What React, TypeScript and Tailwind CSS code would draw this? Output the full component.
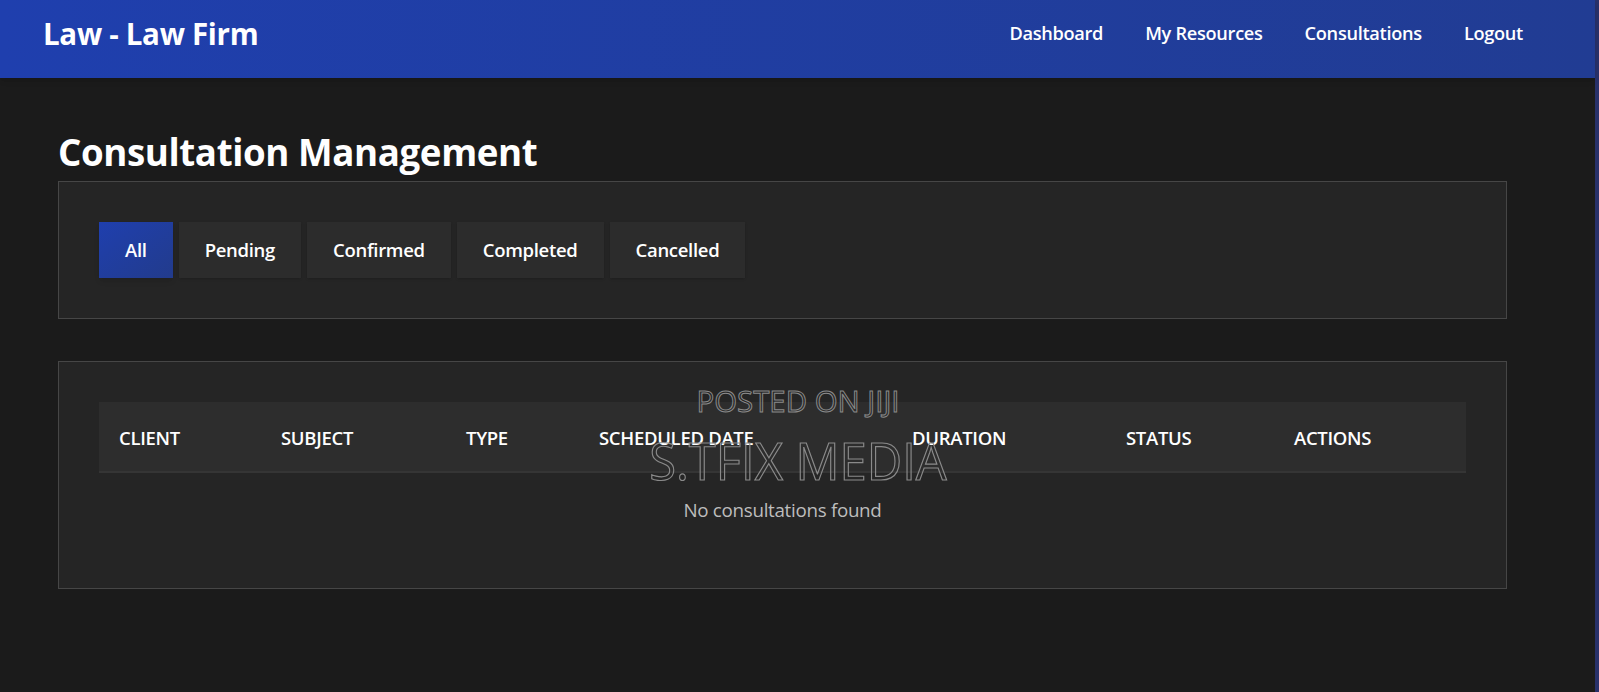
import React, { useState } from 'react';

const FILTERS = ['All', 'Pending', 'Confirmed', 'Completed', 'Cancelled'];
const NAV = ['Dashboard', 'My Resources', 'Consultations', 'Logout'];
const COLUMNS = [
  { label: 'Client', w: 'w-[162px]' },
  { label: 'Subject', w: 'w-[185px]' },
  { label: 'Type', w: 'w-[133px]' },
  { label: 'Scheduled Date', w: 'w-[313px]' },
  { label: 'Duration', w: 'w-[214px]' },
  { label: 'Status', w: 'w-[168px]' },
  { label: 'Actions', w: '' },
];

const App: React.FC = () => {
  const [filter, setFilter] = useState('All');

  return (
    <div className="relative min-h-[692px] border-r-4 border-[#28316a] bg-[#1b1b1b] font-['Open_Sans',sans-serif] text-white">
      <header className="flex h-[78px] items-center justify-between bg-gradient-to-r from-[#1f3fae] to-[#213c93] pb-[10px] pl-[43px] pr-[51px] shadow-md">
        <h1 className="text-[29.5px] font-bold tracking-[-0.3px]">Law - Law Firm</h1>
        <nav className="flex">
          {NAV.map((item) => (
            <a key={item} href="#" className="px-[21px] text-[18.2px] font-semibold tracking-[-0.3px]">
              {item}
            </a>
          ))}
        </nav>
      </header>

      <main className="pl-[58px] pr-[88px] pt-[47px]">
        <h2 className="mb-[2px] text-[36.7px] font-bold leading-[54px] tracking-[-0.4px]">Consultation Management</h2>

        <section className="border border-[#464646] bg-[#252525] p-10">
          <div className="flex gap-[6px]">
            {FILTERS.map((f) => (
              <button
                key={f}
                onClick={() => setFilter(f)}
                className={
                  'h-[56px] px-[26px] text-[18.5px] font-semibold tracking-[-0.3px] ' +
                  (filter === f
                    ? 'bg-gradient-to-br from-[#1f3fae] to-[#223b8c] shadow-md'
                    : 'bg-[#2c2c2c] shadow-sm')
                }
              >
                {f}
              </button>
            ))}
          </div>
        </section>

        <section className="mt-[42px] border border-[#464646] bg-[#252525] px-10 pb-[64px] pt-10">
          <table className="w-full border-collapse">
            <thead>
              <tr className="h-[70px] border-b-2 border-[#353535] bg-[#2d2d2d]">
                {COLUMNS.map((c) => (
                  <th
                    key={c.label}
                    className={'px-5 pt-[3px] text-left text-[18.5px] font-semibold uppercase tracking-[-0.3px] ' + c.w}
                  >
                    {c.label}
                  </th>
                ))}
              </tr>
            </thead>
            <tbody>
              <tr>
                <td colSpan={7} className="pt-[23px] text-center text-[18.8px] text-[#bdbdbd] tracking-[-0.3px]">
                  No consultations found
                </td>
              </tr>
            </tbody>
          </table>
        </section>
      </main>

      <span className="pointer-events-none absolute left-[798px] top-[386px] -translate-x-1/2 scale-x-[0.98] whitespace-nowrap text-[30px] leading-none text-transparent [-webkit-text-stroke:1px_#8a8a8a]">
        POSTED ON JIJI
      </span>
      <span className="pointer-events-none absolute left-[798px] top-[434px] -translate-x-1/2 scale-x-[0.94] whitespace-nowrap text-[52px] leading-none text-transparent [-webkit-text-stroke:1.2px_#8a8a8a]">
        S.TFIX MEDIA
      </span>
    </div>
  );
};

export default App;
